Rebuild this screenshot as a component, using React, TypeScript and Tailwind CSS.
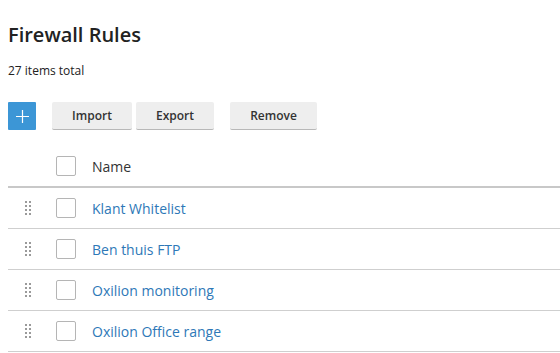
import React from "react";

function DragHandle() {
  return (
    <div className="grid grid-cols-2 gap-x-[2px] gap-y-[2px] w-[6px]">
      {Array.from({ length: 8 }).map((_, i) => (
        <span key={i} className="block w-[2px] h-[2px] bg-[#9a9a9a]" />
      ))}
    </div>
  );
}

function Checkbox() {
  return <span className="block w-[20px] h-[20px] border border-[#b5b5b5] rounded-[2px] bg-white" />;
}

const rows = ["Klant Whitelist", "Ben thuis FTP", "Oxilion monitoring", "Oxilion Office range"];

export default function App() {
  return (
    <div className="w-[560px] h-[353px] overflow-hidden bg-white pl-2 font-['Open_Sans',sans-serif] text-[#222]">
      <h1 className="pt-[21px] text-[20px] leading-[28px] font-semibold text-[#222]">Firewall Rules</h1>
      <p className="mt-[14px] text-[12px] leading-[16px] text-[#222]">27 items total</p>
      <div className="mt-[23px] flex items-center">
        <button className="w-[28px] h-[28px] bg-[#3c96d6] rounded-[1px] flex items-center justify-center">
          <svg width="13" height="13" viewBox="0 0 13 13">
            <path d="M6.5 0V13M0 6.5H13" stroke="white" strokeWidth="1.2" />
          </svg>
        </button>
        <button className="ml-[16px] w-[80px] h-[28px] bg-[#eeeeee] border-b border-[#b8b8b8] rounded-[2px] text-[12px] font-semibold text-[#333]">Import</button>
        <button className="ml-[4px] w-[78px] h-[28px] bg-[#eeeeee] border-b border-[#b8b8b8] rounded-[2px] text-[12px] font-semibold text-[#333]">Export</button>
        <button className="ml-[16px] w-[87px] h-[28px] bg-[#eeeeee] border-b border-[#b8b8b8] rounded-[2px] text-[12px] font-semibold text-[#333]">Remove</button>
      </div>
      <div className="mt-[16px] h-[42px] flex items-center border-b-2 border-[#c8c8c8]">
        <div className="w-[48px]" />
        <Checkbox />
        <span className="ml-[16px] text-[14px] text-[#333]">Name</span>
      </div>
      {rows.map((r) => (
        <div key={r} className="h-[41px] flex items-center border-b border-[#cfcfcf]">
          <div className="w-[48px] pl-[17px]">
            <DragHandle />
          </div>
          <Checkbox />
          <span className="ml-[16px] text-[14px] text-[#2e78b7]">{r}</span>
        </div>
      ))}
    </div>
  );
}
